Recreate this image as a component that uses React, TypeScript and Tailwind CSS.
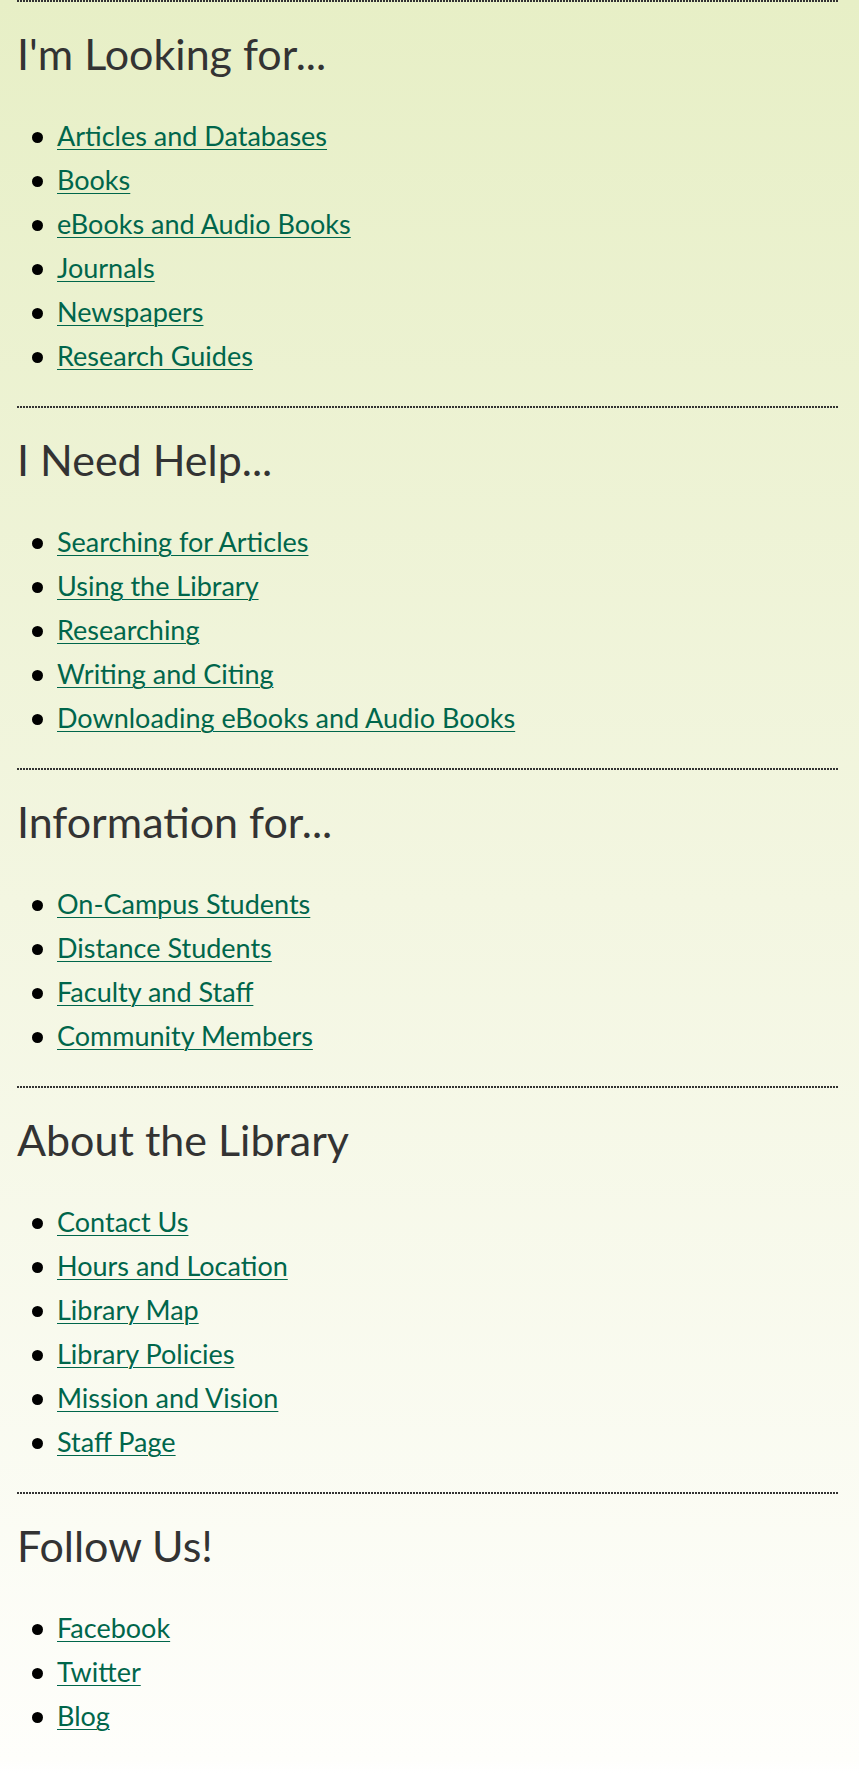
import React from "react";

type Section = { title: string; links: string[] };

const sections: Section[] = [
  {
    title: "I'm Looking for...",
    links: [
      "Articles and Databases",
      "Books",
      "eBooks and Audio Books",
      "Journals",
      "Newspapers",
      "Research Guides",
    ],
  },
  {
    title: "I Need Help...",
    links: [
      "Searching for Articles",
      "Using the Library",
      "Researching",
      "Writing and Citing",
      "Downloading eBooks and Audio Books",
    ],
  },
  {
    title: "Information for...",
    links: [
      "On-Campus Students",
      "Distance Students",
      "Faculty and Staff",
      "Community Members",
    ],
  },
  {
    title: "About the Library",
    links: [
      "Contact Us",
      "Hours and Location",
      "Library Map",
      "Library Policies",
      "Mission and Vision",
      "Staff Page",
    ],
  },
  {
    title: "Follow Us!",
    links: ["Facebook", "Twitter", "Blog"],
  },
];

export default function App() {
  return (
    <div className="min-h-[1773px] w-full bg-[linear-gradient(to_bottom,#e7efc6_0px,#f3f6e1_900px,#fefefb_1760px,#ffffff_1773px)] font-['Lato','Noto_Sans',sans-serif]">
      <div className="w-[821px] ml-[17px]">
        {sections.map((s) => (
          <section key={s.title}>
            <div className="h-[2px] w-full bg-[repeating-linear-gradient(to_right,#333333_0px,#333333_2px,transparent_2px,transparent_3px)]" />
            <h2 className="pt-[27px] text-[43px] leading-[50px] font-normal text-[#333333]">
              {s.title}
            </h2>
            <ul className="mt-[35px] pb-[28px] text-[27px] leading-[44px]">
              {s.links.map((l) => (
                <li key={l} className="flex items-center">
                  <span className="ml-[15px] mr-[14px] mt-[3px] h-[11px] w-[11px] shrink-0 rounded-full bg-black" />
                  <a
                    href="#"
                    className="text-[#00664b] underline decoration-1 underline-offset-[3px]"
                  >
                    {l}
                  </a>
                </li>
              ))}
            </ul>
          </section>
        ))}
      </div>
    </div>
  );
}
